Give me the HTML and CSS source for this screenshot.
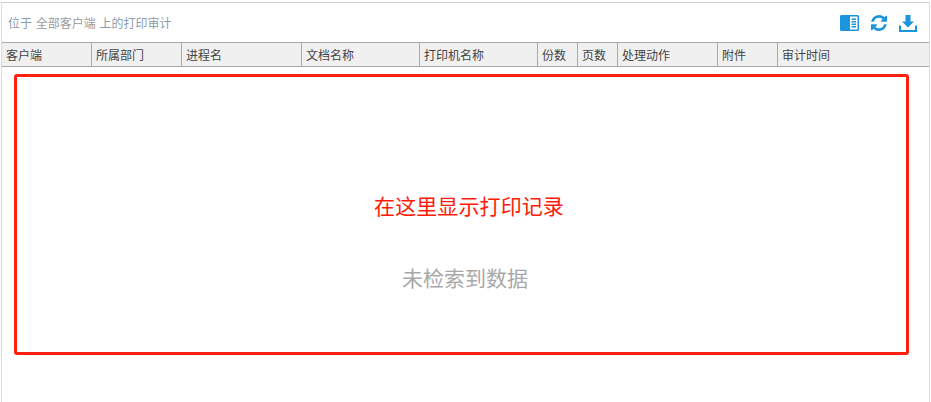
FILE: index.html
```html
<!DOCTYPE html>
<html lang="zh-CN">
<head>
<meta charset="utf-8">
<title>打印审计</title>
<link rel="stylesheet" href="styles.css">
</head>
<body>
<main class="panel">
  <div class="toolbar">
    <div class="crumb">位于 <span class="crumb-strong">全部客户端</span> 上的打印审计</div>
    <div class="tools">
      <svg class="icon" width="19" height="16" viewBox="0 0 19 16"><path fill="#1b96dc" d="M1.5 0H17.5A1.5 1.5 0 0 1 19 1.5V14.500A1.500 1.500 0 0 1 17.500 16H1.500A1.500 1.500 0 0 1 0 14.500V1.500A1.500 1.500 0 0 1 1.500 0Z"/><path fill="#fff" d="M10 1.500H17.500V14.500H10Z"/><path fill="#1b96dc" d="M11.500 3.500H16V5H11.500ZM11.500 6H16V7.500H11.500ZM11.500 8.500H16V10H11.500ZM11.500 11H16V12.500H11.500Z"/></svg>
      <svg class="icon" width="16" height="16" viewBox="0 0 1536 1536"><path fill="#1b96dc" d="M1511 928q0 5-1 7-64 268-268 434.500T764 1536q-146 0-282.500-55T238 1324l-129 129q-19 19-45 19t-45-19-19-45V960q0-26 19-45t45-19h448q26 0 45 19t19 45-19 45l-137 137q71 66 161 102t187 36q134 0 250-65t186-179q11-17 53-117 8-23 30-23h192q13 0 22.500 9.500t9.500 22.500zm25-800v448q0 26-19 45t-45 19h-448q-26 0-45-19t-19-45 19-45l138-138q-148-137-349-137-134 0-250 65T332 500q-11 17-53 117-8 23-30 23H50q-13 0-22.500-9.500T18 608v-7q65-268 270-434.500T768 0q146 0 284 55.500T1297 212l130-129q19-19 45-19t45 19 19 45z"/></svg>
      <svg class="icon" width="18" height="17" viewBox="0 0 18 17"><path fill="#1b96dc" d="M6.500 0H11.500V6.500H15L9 12.500 3 6.500H6.500Z"/><path fill="#1b96dc" d="M0 10.500H2V15H16V10.500H18V17H0Z"/></svg>
    </div>
  </div>
  <div class="thead">
    <div class="th col-client">客户端</div>
    <div class="th col-dept">所属部门</div>
    <div class="th col-proc">进程名</div>
    <div class="th col-doc">文档名称</div>
    <div class="th col-printer">打印机名称</div>
    <div class="th col-copies">份数</div>
    <div class="th col-pages">页数</div>
    <div class="th col-action">处理动作</div>
    <div class="th col-attach">附件</div>
    <div class="th col-time">审计时间</div>
  </div>
  <div class="tbody">
    <div class="note">
      <p class="note-text">在这里显示打印记录</p>
      <p class="empty">未检索到数据</p>
    </div>
  </div>
</main>
</body>
</html>
```
FILE: styles.css
```css
* { box-sizing: border-box; }
html, body { height: 100%; }
body {
  margin: 0;
  padding: 2px 1px 0 1px;
  background: #fff;
  font-family: "Noto Sans CJK SC", "Liberation Sans", sans-serif;
  overflow: hidden;
}
.panel {
  width: 929px;
  height: 400px;
  border-top: 1px solid #cfcfcf;
  border-left: 1px solid #dcdcdc;
  border-right: 1px solid #dcdcdc;
  display: flex;
  flex-direction: column;
}
.toolbar {
  height: 39px;
  flex: none;
  display: flex;
  align-items: center;
  justify-content: space-between;
  padding: 0 2px 0 6px;
}
.crumb { font-size: 12px; color: #8a9bab; line-height: 16px; word-spacing: 1px; }
.crumb-strong { color: #9a9a9a; }
.tools { display: flex; align-items: center; gap: 12px; margin-top: 1px; margin-right: 10px; }
.icon { display: block; }
.thead {
  height: 25px;
  flex: none;
  display: flex;
  background: #f0f0f0;
  border-top: 1px solid #a9a9a9;
  border-bottom: 1px solid #a9a9a9;
}
.th {
  font-size: 12px;
  line-height: 23px;
  color: #444;
  padding-left: 4px;
  border-right: 1px solid #a9a9a9;
  white-space: nowrap;
}
.col-client { width: 90px; }
.col-dept { width: 90px; }
.col-proc { width: 120px; }
.col-doc { width: 118px; }
.col-printer { width: 118px; }
.col-copies { width: 40px; }
.col-pages { width: 40px; }
.col-action { width: 100px; }
.col-attach { width: 60px; }
.col-time { flex: 1; border-right: 0; }
.tbody { flex: 1; padding: 7px 20px 0 12px; }
.note {
  height: 281px;
  border: 3px solid #ff2012;
  border-radius: 3px;
  display: flex;
  flex-direction: column;
  align-items: center;
  padding: 113px 0 0 7px;
}
.note-text, .empty { margin: 0; font-size: 21px; line-height: 30px; }
.note-text { color: #ff1a0a; margin-left: 8px; letter-spacing: 0.1px; }
.empty { color: #a8a8a8; margin-top: 42px; }
```
